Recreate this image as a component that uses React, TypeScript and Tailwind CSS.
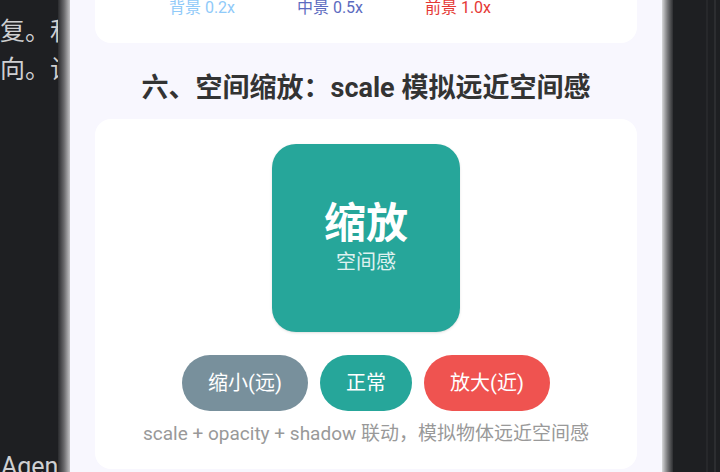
import React from 'react'

const font = { fontFamily: 'Roboto, "Noto Sans CJK SC", sans-serif' }

const layers = [
  { label: '背景 0.2x', color: 'text-[#90caf9]' },
  { label: '中景 0.5x', color: 'text-[#5c6bc0]' },
  { label: '前景 1.0x', color: 'text-[#e53935]' },
]

const App: React.FC = () => {
  return (
    <div className="flex h-[472px] w-[720px] overflow-hidden bg-[#1e1f22]" style={font}>
      {/* Desktop behind the emulator */}
      <div className="flex w-[58px] shrink-0 flex-col overflow-hidden pt-[13px] text-[25px] text-[#cfd0d2]">
        <div className="whitespace-nowrap leading-[38px]">复。和</div>
        <div className="whitespace-nowrap leading-[38px]">向。让</div>
        <div className="mt-auto mb-[-14px] whitespace-nowrap pl-[1px] leading-[38px]">Agent</div>
      </div>

      {/* Left bezel */}
      <div className="w-[12px] shrink-0 bg-gradient-to-r from-[#2a2b2e] via-[#6a6a6c] to-[#c4c4c6]" />

      {/* Phone screen */}
      <div className="flex w-[592px] shrink-0 flex-col bg-[#f8f7fe] px-[25px]">
        {/* Parallax card (cut off) */}
        <div className="flex h-[43px] shrink-0 rounded-b-[16px] bg-white pl-[43px]">
          {layers.map((l) => (
            <div key={l.label} className={`w-[128px] text-center text-[16px] leading-[16px] ${l.color}`}>
              {l.label}
            </div>
          ))}
        </div>

        <h2 className="mt-[30px] text-center text-[27px] font-bold leading-[30px] text-[#333333]">
          六、空间缩放：scale 模拟远近空间感
        </h2>

        <div className="mt-[16px] flex flex-col items-center rounded-[16px] bg-white pt-[25px] pb-[23px]">
          <div className="flex h-[188px] w-[188px] flex-col items-center justify-center rounded-[24px] bg-[#26a69a] shadow-sm">
            <div className="text-[42px] font-bold leading-[48px] text-white">缩放</div>
            <div className="text-[20px] leading-[28px] text-white/85">空间感</div>
          </div>

          <div className="mt-[23px] flex gap-[12px]">
            <button className="h-[56px] w-[126px] rounded-full bg-[#78909c] text-[20px] text-white">缩小(远)</button>
            <button className="h-[56px] w-[92px] rounded-full bg-[#26a69a] text-[20px] text-white">正常</button>
            <button className="h-[56px] w-[126px] rounded-full bg-[#ef5350] text-[20px] text-white">放大(近)</button>
          </div>

          <p className="mt-[11px] text-[19px] leading-[24px] text-[#999999]">
            scale + opacity + shadow 联动，模拟物体远近空间感
          </p>
        </div>
      </div>

      {/* Right bezel */}
      <div className="w-[11px] shrink-0 bg-gradient-to-r from-[#d8d8da] via-[#7a7a7c] to-[#2e2f32]" />

      <div className="flex flex-1">
        <div className="w-[33px]" />
        <div className="w-[2px] bg-[#27282b]" />
        <div className="w-[6px]" />
        <div className="w-[2px] bg-[#2c2d30]" />
      </div>
    </div>
  )
}

export default App
